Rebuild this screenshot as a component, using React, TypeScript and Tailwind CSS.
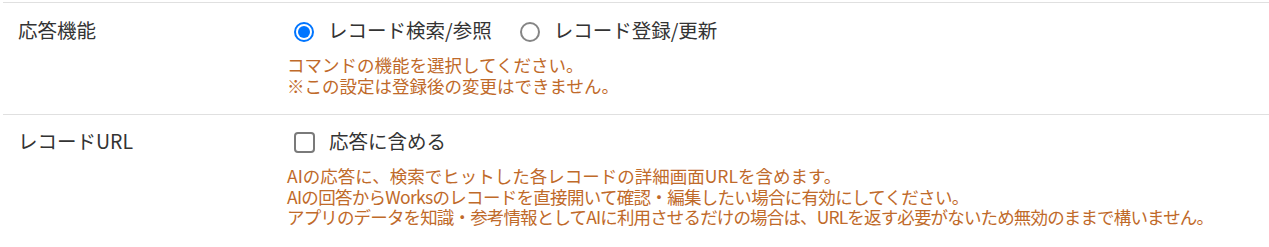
import React from "react";

const font = { fontFamily: '"Noto Sans CJK JP", "Noto Sans", sans-serif' };

function Radio({ checked }: { checked: boolean }) {
  return checked ? (
    <span className="flex h-[20px] w-[20px] shrink-0 items-center justify-center rounded-full border-[2px] border-[#0075ff] bg-white">
      <span className="block h-[12px] w-[12px] rounded-full bg-[#0075ff]" />
    </span>
  ) : (
    <span className="block h-[20px] w-[20px] shrink-0 rounded-full border-[2px] border-[#858585] bg-white" />
  );
}

export default function App() {
  return (
    <div className="bg-white pt-[2px] pl-[3px] text-[#333333]" style={font}>
      <div className="grid grid-cols-[284px_1fr] border-t border-[#e0e0e0] pt-[12px] pb-[18px]">
        <div className="pl-[15px] text-[19.5px] leading-[30px]">応答機能</div>
        <div>
          <div className="flex h-[30px] items-center pl-[7px] text-[19.5px]">
            <span className="mt-[3px] block">
              <Radio checked />
            </span>
            <span className="ml-[14px]">レコード検索/参照</span>
            <span className="ml-[28px] mt-[3px] block">
              <Radio checked={false} />
            </span>
            <span className="ml-[14px]">レコード登録/更新</span>
          </div>
          <div className="mt-[10px] whitespace-nowrap text-[17.5px] leading-[20.5px] text-[#bf6a2a]">
            <div>コマンドの機能を選択してください。</div>
            <div>※この設定は登録後の変更はできません。</div>
          </div>
        </div>
      </div>
      <div className="grid grid-cols-[284px_1fr] border-t border-[#e0e0e0] pt-[11px] pb-[18px]">
        <div className="pl-[15px] text-[19.5px] leading-[30px]">レコードURL</div>
        <div>
          <div className="flex h-[30px] items-center pl-[7px] text-[19.5px]">
            <span className="mt-[3px] block h-[21px] w-[21px] shrink-0 rounded-[4px] border-[2px] border-[#7a7a7a] bg-white" />
            <span className="ml-[14px]">応答に含める</span>
          </div>
          <div className="mt-[10px] whitespace-nowrap text-[17.5px] leading-[20.5px] text-[#bf6a2a]">
            <div>AIの応答に、検索でヒットした各レコードの詳細画面URLを含めます。</div>
            <div className="tracking-[-0.7px]">AIの回答からWorksのレコードを直接開いて確認・編集したい場合に有効にしてください。</div>
            <div className="tracking-[-0.85px]">アプリのデータを知識・参考情報としてAIに利用させるだけの場合は、URLを返す必要がないため無効のままで構いません。</div>
          </div>
        </div>
      </div>
    </div>
  );
}
